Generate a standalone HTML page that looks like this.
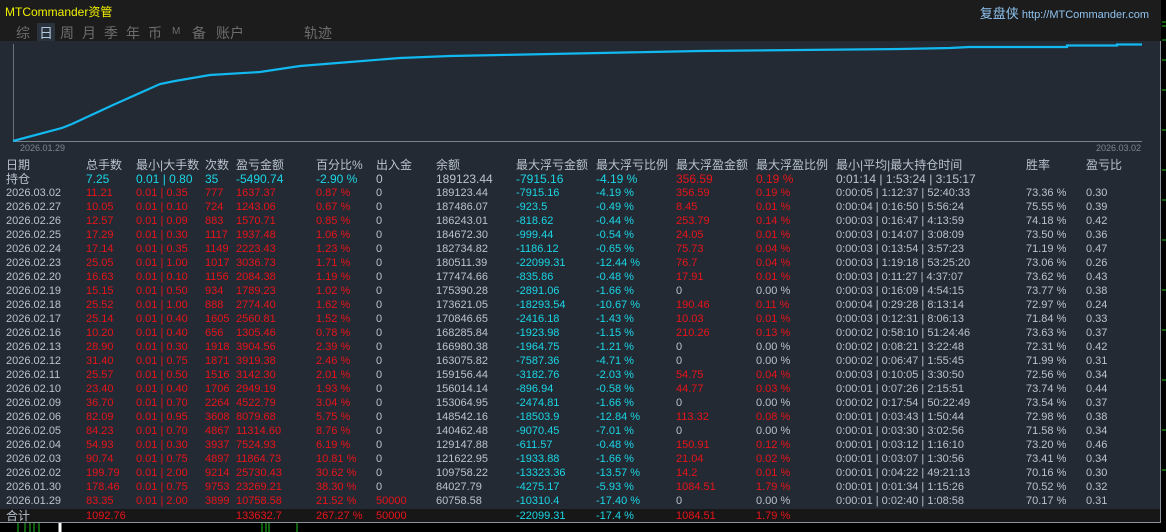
<!DOCTYPE html>
<html><head><meta charset="utf-8"><style>
*{margin:0;padding:0;box-sizing:border-box}
body{width:1166px;height:532px;background:#000;overflow:hidden;position:relative;font-family:"Liberation Sans","Noto Sans CJK SC",sans-serif;font-size:11px;color:#b9c3cf}
.top{position:absolute;left:0;top:0;width:1161px;height:41px;background:#1c1c1c}
.logo{position:absolute;left:5px;top:3px;color:#f0f000;font-size:12px}
.site{position:absolute;right:12px;top:3px;color:#8fc3f0;font-size:11px}
.site b{font-weight:normal;font-size:13px}
.tabs{position:absolute;top:23px;left:16px;color:#6d6d6d;font-size:14px}
.tabs span{position:absolute;top:0;white-space:nowrap}
.panel{position:absolute;left:0;top:41px;width:1161px;height:482px;background:#232a33;border-right:1px solid #8a929c;border-bottom:1px solid #8a929c}
.r{position:absolute;left:0;width:1160px;height:14px;line-height:14px;white-space:nowrap}
.r span{position:absolute;top:0}
.d{color:#e8131a}.c{color:#1ad6e6}
.c1{left:6px}.c2{left:86px}.c3{left:136px}.c4{left:205px}.c5{left:236px}.c6{left:316px}.c7{left:376px}.c8{left:436px}.c9{left:516px}.c10{left:596px}.c11{left:676px}.c12{left:756px}.c13{left:836px}.c14{left:1026px}.c15{left:1086px}
.hd{font-size:12px}
.sum{position:absolute;left:0;top:509px;width:1160px;height:13px;background:#171717}
.axl{position:absolute;font-size:9px;color:#7d8590;top:143px}
</style></head><body>
<div class="top">
<div class="logo">MTCommander资管</div>
<div class="site"><b>复盘侠</b> http://MTCommander.com</div>
<div class="tabs">
<span style="left:0">综</span>
<span style="left:21px;color:#b0c8e0;background:#2a323c;padding:0 2px">日</span>
<span style="left:44px">周</span>
<span style="left:66px">月</span>
<span style="left:88px">季</span>
<span style="left:110px">年</span>
<span style="left:132px">币</span>
<span style="left:156px;font-size:10px;top:3px">M</span>
<span style="left:176px">备</span>
<span style="left:200px">账户</span>
<span style="left:288px">轨迹</span>
</div>
</div>
<div class="panel"></div>
<svg style="position:absolute;left:0;top:0" width="1166" height="532">
<line x1="13.5" y1="44" x2="13.5" y2="141" stroke="#6a7078"/>
<line x1="13" y1="141.5" x2="1142" y2="141.5" stroke="#7a8088"/>
<polyline fill="none" stroke="#12b8f0" stroke-width="2.2" points="13,141 62,128 72,124 113,105 160,84 175,81 210,75 260,72 300,66 350,62 400,58 450,56 500,55 550,54 600,53 650,52 700,51 750,50.5 800,50 850,49.5 900,49 950,48 969,47 1067,47 1067,45.5 1117,45.5 1117,44.5 1142,44.5"/>
<rect x="1161" y="0" width="5" height="532" fill="#000"/>
<g stroke="#20c020"><line x1="1162" y1="22" x2="1166" y2="22"/><line x1="1162" y1="26" x2="1166" y2="26"/><line x1="1162" y1="40" x2="1166" y2="40"/><line x1="1162" y1="60" x2="1166" y2="60"/><line x1="1162" y1="90" x2="1166" y2="90"/><line x1="1162" y1="130" x2="1166" y2="130"/><line x1="1162" y1="170" x2="1166" y2="170"/><line x1="1162" y1="200" x2="1166" y2="200"/><line x1="1162" y1="240" x2="1166" y2="240"/><line x1="1162" y1="290" x2="1166" y2="290"/><line x1="1162" y1="330" x2="1166" y2="330"/><line x1="1162" y1="380" x2="1166" y2="380"/><line x1="1162" y1="430" x2="1166" y2="430"/><line x1="1162" y1="470" x2="1166" y2="470"/>
<line x1="18" y1="523" x2="18" y2="532"/><line x1="25" y1="523" x2="25" y2="532"/><line x1="30" y1="523" x2="30" y2="532"/><line x1="34" y1="523" x2="34" y2="532"/><line x1="39" y1="523" x2="39" y2="532"/><line x1="60" y1="523" x2="60" y2="532" stroke-width="3" stroke="#fff"/><line x1="262" y1="523" x2="262" y2="532"/><line x1="266" y1="523" x2="266" y2="532"/><line x1="269" y1="523" x2="269" y2="532"/><line x1="297" y1="523" x2="297" y2="532"/></g>
</svg>
<div class="axl" style="left:20px">2026.01.29</div>
<div class="axl" style="left:1096px">2026.03.02</div>
<div class="sum"></div>

<div class="r hd" style="top:158px"><span class="c1">日期</span><span class="c2">总手数</span><span class="c3">最小|大手数</span><span class="c4">次数</span><span class="c5">盈亏金额</span><span class="c6">百分比%</span><span class="c7">出入金</span><span class="c8">余额</span><span class="c9">最大浮亏金额</span><span class="c10">最大浮亏比例</span><span class="c11">最大浮盈金额</span><span class="c12">最大浮盈比例</span><span class="c13">最小|平均|最大持仓时间</span><span class="c14">胜率</span><span class="c15">盈亏比</span></div>
<div class="r hd" style="top:172px"><span class="c1">持仓</span><span class="c2 c">7.25</span><span class="c3 c">0.01 | 0.80</span><span class="c4 c">35</span><span class="c5 c">-5490.74</span><span class="c6 c">-2.90 %</span><span class="c7">0</span><span class="c8">189123.44</span><span class="c9 c">-7915.16</span><span class="c10 c">-4.19 %</span><span class="c11 d">356.59</span><span class="c12 d">0.19 %</span><span class="c13">0:01:14 | 1:53:24 | 3:15:17</span></div>

<div class="r" style="top:186px"><span class="c1">2026.03.02</span><span class="c2 d">11.21</span><span class="c3 d">0.01 | 0.35</span><span class="c4 d">777</span><span class="c5 d">1637.37</span><span class="c6 d">0.87 %</span><span class="c7">0</span><span class="c8">189123.44</span><span class="c9 c">-7915.16</span><span class="c10 c">-4.19 %</span><span class="c11 d">356.59</span><span class="c12 d">0.19 %</span><span class="c13">0:00:05 | 1:12:37 | 52:40:33</span><span class="c14">73.36 %</span><span class="c15">0.30</span></div>
<div class="r" style="top:200px"><span class="c1">2026.02.27</span><span class="c2 d">10.05</span><span class="c3 d">0.01 | 0.10</span><span class="c4 d">724</span><span class="c5 d">1243.06</span><span class="c6 d">0.67 %</span><span class="c7">0</span><span class="c8">187486.07</span><span class="c9 c">-923.5</span><span class="c10 c">-0.49 %</span><span class="c11 d">8.45</span><span class="c12 d">0.01 %</span><span class="c13">0:00:04 | 0:16:50 | 5:56:24</span><span class="c14">75.55 %</span><span class="c15">0.39</span></div>
<div class="r" style="top:214px"><span class="c1">2026.02.26</span><span class="c2 d">12.57</span><span class="c3 d">0.01 | 0.09</span><span class="c4 d">883</span><span class="c5 d">1570.71</span><span class="c6 d">0.85 %</span><span class="c7">0</span><span class="c8">186243.01</span><span class="c9 c">-818.62</span><span class="c10 c">-0.44 %</span><span class="c11 d">253.79</span><span class="c12 d">0.14 %</span><span class="c13">0:00:03 | 0:16:47 | 4:13:59</span><span class="c14">74.18 %</span><span class="c15">0.42</span></div>
<div class="r" style="top:228px"><span class="c1">2026.02.25</span><span class="c2 d">17.29</span><span class="c3 d">0.01 | 0.30</span><span class="c4 d">1117</span><span class="c5 d">1937.48</span><span class="c6 d">1.06 %</span><span class="c7">0</span><span class="c8">184672.30</span><span class="c9 c">-999.44</span><span class="c10 c">-0.54 %</span><span class="c11 d">24.05</span><span class="c12 d">0.01 %</span><span class="c13">0:00:03 | 0:14:07 | 3:08:09</span><span class="c14">73.50 %</span><span class="c15">0.36</span></div>
<div class="r" style="top:242px"><span class="c1">2026.02.24</span><span class="c2 d">17.14</span><span class="c3 d">0.01 | 0.35</span><span class="c4 d">1149</span><span class="c5 d">2223.43</span><span class="c6 d">1.23 %</span><span class="c7">0</span><span class="c8">182734.82</span><span class="c9 c">-1186.12</span><span class="c10 c">-0.65 %</span><span class="c11 d">75.73</span><span class="c12 d">0.04 %</span><span class="c13">0:00:03 | 0:13:54 | 3:57:23</span><span class="c14">71.19 %</span><span class="c15">0.47</span></div>
<div class="r" style="top:256px"><span class="c1">2026.02.23</span><span class="c2 d">25.05</span><span class="c3 d">0.01 | 1.00</span><span class="c4 d">1017</span><span class="c5 d">3036.73</span><span class="c6 d">1.71 %</span><span class="c7">0</span><span class="c8">180511.39</span><span class="c9 c">-22099.31</span><span class="c10 c">-12.44 %</span><span class="c11 d">76.7</span><span class="c12 d">0.04 %</span><span class="c13">0:00:03 | 1:19:18 | 53:25:20</span><span class="c14">73.06 %</span><span class="c15">0.26</span></div>
<div class="r" style="top:270px"><span class="c1">2026.02.20</span><span class="c2 d">16.63</span><span class="c3 d">0.01 | 0.10</span><span class="c4 d">1156</span><span class="c5 d">2084.38</span><span class="c6 d">1.19 %</span><span class="c7">0</span><span class="c8">177474.66</span><span class="c9 c">-835.86</span><span class="c10 c">-0.48 %</span><span class="c11 d">17.91</span><span class="c12 d">0.01 %</span><span class="c13">0:00:03 | 0:11:27 | 4:37:07</span><span class="c14">73.62 %</span><span class="c15">0.43</span></div>
<div class="r" style="top:284px"><span class="c1">2026.02.19</span><span class="c2 d">15.15</span><span class="c3 d">0.01 | 0.50</span><span class="c4 d">934</span><span class="c5 d">1789.23</span><span class="c6 d">1.02 %</span><span class="c7">0</span><span class="c8">175390.28</span><span class="c9 c">-2891.06</span><span class="c10 c">-1.66 %</span><span class="c11">0</span><span class="c12">0.00 %</span><span class="c13">0:00:03 | 0:16:09 | 4:54:15</span><span class="c14">73.77 %</span><span class="c15">0.38</span></div>
<div class="r" style="top:298px"><span class="c1">2026.02.18</span><span class="c2 d">25.52</span><span class="c3 d">0.01 | 1.00</span><span class="c4 d">888</span><span class="c5 d">2774.40</span><span class="c6 d">1.62 %</span><span class="c7">0</span><span class="c8">173621.05</span><span class="c9 c">-18293.54</span><span class="c10 c">-10.67 %</span><span class="c11 d">190.46</span><span class="c12 d">0.11 %</span><span class="c13">0:00:04 | 0:29:28 | 8:13:14</span><span class="c14">72.97 %</span><span class="c15">0.24</span></div>
<div class="r" style="top:312px"><span class="c1">2026.02.17</span><span class="c2 d">25.14</span><span class="c3 d">0.01 | 0.40</span><span class="c4 d">1605</span><span class="c5 d">2560.81</span><span class="c6 d">1.52 %</span><span class="c7">0</span><span class="c8">170846.65</span><span class="c9 c">-2416.18</span><span class="c10 c">-1.43 %</span><span class="c11 d">10.03</span><span class="c12 d">0.01 %</span><span class="c13">0:00:03 | 0:12:31 | 8:06:13</span><span class="c14">71.84 %</span><span class="c15">0.33</span></div>
<div class="r" style="top:326px"><span class="c1">2026.02.16</span><span class="c2 d">10.20</span><span class="c3 d">0.01 | 0.40</span><span class="c4 d">656</span><span class="c5 d">1305.46</span><span class="c6 d">0.78 %</span><span class="c7">0</span><span class="c8">168285.84</span><span class="c9 c">-1923.98</span><span class="c10 c">-1.15 %</span><span class="c11 d">210.26</span><span class="c12 d">0.13 %</span><span class="c13">0:00:02 | 0:58:10 | 51:24:46</span><span class="c14">73.63 %</span><span class="c15">0.37</span></div>
<div class="r" style="top:340px"><span class="c1">2026.02.13</span><span class="c2 d">28.90</span><span class="c3 d">0.01 | 0.30</span><span class="c4 d">1918</span><span class="c5 d">3904.56</span><span class="c6 d">2.39 %</span><span class="c7">0</span><span class="c8">166980.38</span><span class="c9 c">-1964.75</span><span class="c10 c">-1.21 %</span><span class="c11">0</span><span class="c12">0.00 %</span><span class="c13">0:00:02 | 0:08:21 | 3:22:48</span><span class="c14">72.31 %</span><span class="c15">0.42</span></div>
<div class="r" style="top:354px"><span class="c1">2026.02.12</span><span class="c2 d">31.40</span><span class="c3 d">0.01 | 0.75</span><span class="c4 d">1871</span><span class="c5 d">3919.38</span><span class="c6 d">2.46 %</span><span class="c7">0</span><span class="c8">163075.82</span><span class="c9 c">-7587.36</span><span class="c10 c">-4.71 %</span><span class="c11">0</span><span class="c12">0.00 %</span><span class="c13">0:00:02 | 0:06:47 | 1:55:45</span><span class="c14">71.99 %</span><span class="c15">0.31</span></div>
<div class="r" style="top:368px"><span class="c1">2026.02.11</span><span class="c2 d">25.57</span><span class="c3 d">0.01 | 0.50</span><span class="c4 d">1516</span><span class="c5 d">3142.30</span><span class="c6 d">2.01 %</span><span class="c7">0</span><span class="c8">159156.44</span><span class="c9 c">-3182.76</span><span class="c10 c">-2.03 %</span><span class="c11 d">54.75</span><span class="c12 d">0.04 %</span><span class="c13">0:00:03 | 0:10:05 | 3:30:50</span><span class="c14">72.56 %</span><span class="c15">0.34</span></div>
<div class="r" style="top:382px"><span class="c1">2026.02.10</span><span class="c2 d">23.40</span><span class="c3 d">0.01 | 0.40</span><span class="c4 d">1706</span><span class="c5 d">2949.19</span><span class="c6 d">1.93 %</span><span class="c7">0</span><span class="c8">156014.14</span><span class="c9 c">-896.94</span><span class="c10 c">-0.58 %</span><span class="c11 d">44.77</span><span class="c12 d">0.03 %</span><span class="c13">0:00:01 | 0:07:26 | 2:15:51</span><span class="c14">73.74 %</span><span class="c15">0.44</span></div>
<div class="r" style="top:396px"><span class="c1">2026.02.09</span><span class="c2 d">36.70</span><span class="c3 d">0.01 | 0.70</span><span class="c4 d">2264</span><span class="c5 d">4522.79</span><span class="c6 d">3.04 %</span><span class="c7">0</span><span class="c8">153064.95</span><span class="c9 c">-2474.81</span><span class="c10 c">-1.66 %</span><span class="c11">0</span><span class="c12">0.00 %</span><span class="c13">0:00:02 | 0:17:54 | 50:22:49</span><span class="c14">73.54 %</span><span class="c15">0.37</span></div>
<div class="r" style="top:410px"><span class="c1">2026.02.06</span><span class="c2 d">82.09</span><span class="c3 d">0.01 | 0.95</span><span class="c4 d">3608</span><span class="c5 d">8079.68</span><span class="c6 d">5.75 %</span><span class="c7">0</span><span class="c8">148542.16</span><span class="c9 c">-18503.9</span><span class="c10 c">-12.84 %</span><span class="c11 d">113.32</span><span class="c12 d">0.08 %</span><span class="c13">0:00:01 | 0:03:43 | 1:50:44</span><span class="c14">72.98 %</span><span class="c15">0.38</span></div>
<div class="r" style="top:424px"><span class="c1">2026.02.05</span><span class="c2 d">84.23</span><span class="c3 d">0.01 | 0.70</span><span class="c4 d">4867</span><span class="c5 d">11314.60</span><span class="c6 d">8.76 %</span><span class="c7">0</span><span class="c8">140462.48</span><span class="c9 c">-9070.45</span><span class="c10 c">-7.01 %</span><span class="c11">0</span><span class="c12">0.00 %</span><span class="c13">0:00:01 | 0:03:30 | 3:02:56</span><span class="c14">71.58 %</span><span class="c15">0.34</span></div>
<div class="r" style="top:438px"><span class="c1">2026.02.04</span><span class="c2 d">54.93</span><span class="c3 d">0.01 | 0.30</span><span class="c4 d">3937</span><span class="c5 d">7524.93</span><span class="c6 d">6.19 %</span><span class="c7">0</span><span class="c8">129147.88</span><span class="c9 c">-611.57</span><span class="c10 c">-0.48 %</span><span class="c11 d">150.91</span><span class="c12 d">0.12 %</span><span class="c13">0:00:01 | 0:03:12 | 1:16:10</span><span class="c14">73.20 %</span><span class="c15">0.46</span></div>
<div class="r" style="top:452px"><span class="c1">2026.02.03</span><span class="c2 d">90.74</span><span class="c3 d">0.01 | 0.75</span><span class="c4 d">4897</span><span class="c5 d">11864.73</span><span class="c6 d">10.81 %</span><span class="c7">0</span><span class="c8">121622.95</span><span class="c9 c">-1933.88</span><span class="c10 c">-1.66 %</span><span class="c11 d">21.04</span><span class="c12 d">0.02 %</span><span class="c13">0:00:01 | 0:03:07 | 1:30:56</span><span class="c14">73.41 %</span><span class="c15">0.34</span></div>
<div class="r" style="top:466px"><span class="c1">2026.02.02</span><span class="c2 d">199.79</span><span class="c3 d">0.01 | 2.00</span><span class="c4 d">9214</span><span class="c5 d">25730.43</span><span class="c6 d">30.62 %</span><span class="c7">0</span><span class="c8">109758.22</span><span class="c9 c">-13323.36</span><span class="c10 c">-13.57 %</span><span class="c11 d">14.2</span><span class="c12 d">0.01 %</span><span class="c13">0:00:01 | 0:04:22 | 49:21:13</span><span class="c14">70.16 %</span><span class="c15">0.30</span></div>
<div class="r" style="top:480px"><span class="c1">2026.01.30</span><span class="c2 d">178.46</span><span class="c3 d">0.01 | 0.75</span><span class="c4 d">9753</span><span class="c5 d">23269.21</span><span class="c6 d">38.30 %</span><span class="c7">0</span><span class="c8">84027.79</span><span class="c9 c">-4275.17</span><span class="c10 c">-5.93 %</span><span class="c11 d">1084.51</span><span class="c12 d">1.79 %</span><span class="c13">0:00:01 | 0:01:34 | 1:15:26</span><span class="c14">70.52 %</span><span class="c15">0.32</span></div>
<div class="r" style="top:494px"><span class="c1">2026.01.29</span><span class="c2 d">83.35</span><span class="c3 d">0.01 | 2.00</span><span class="c4 d">3899</span><span class="c5 d">10758.58</span><span class="c6 d">21.52 %</span><span class="c7 d">50000</span><span class="c8">60758.58</span><span class="c9 c">-10310.4</span><span class="c10 c">-17.40 %</span><span class="c11">0</span><span class="c12">0.00 %</span><span class="c13">0:00:01 | 0:02:40 | 1:08:58</span><span class="c14">70.17 %</span><span class="c15">0.31</span></div>
<div class="r" style="top:509px"><span class="c1 hd">合计</span><span class="c2 d">1092.76</span><span class="c5 d">133632.7</span><span class="c6 d">267.27 %</span><span class="c7 d">50000</span><span class="c9 c">-22099.31</span><span class="c10 c">-17.4 %</span><span class="c11 d">1084.51</span><span class="c12 d">1.79 %</span></div>
</body></html>
